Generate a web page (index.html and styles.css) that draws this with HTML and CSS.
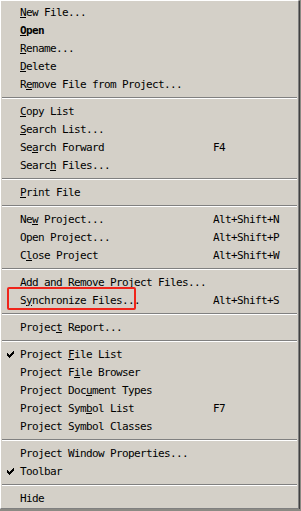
FILE: index.html
```html
<!DOCTYPE html>
<html lang="en">
<head>
    <meta charset="UTF-8">
    <title>Project menu</title>
    <link rel="stylesheet" href="styles.css">
</head>
<body>

    <div class="menu">
        <div class="item"><span class="label"><u>N</u>ew File...</span></div>
        <div class="item"><span class="label bold"><u>O</u>pen</span></div>
        <div class="item"><span class="label"><u>R</u>ename...</span></div>
        <div class="item"><span class="label"><u>D</u>elete</span></div>
        <div class="item"><span class="label">R<u>e</u>move File from Project...</span></div>
        <div class="sep"></div>

        <div class="item"><span class="label"><u>C</u>opy List</span></div>
        <div class="item"><span class="label"><u>S</u>earch List...</span></div>
        <div class="item"><span class="label">Se<u>a</u>rch Forward</span><span class="key">F4</span></div>
        <div class="item"><span class="label">Searc<u>h</u> Files...</span></div>
        <div class="sep"></div>

        <div class="item"><span class="label"><u>P</u>rint File</span></div>
        <div class="sep"></div>

        <div class="item"><span class="label">Ne<u>w</u> Project...</span><span class="key">Alt+Shift+N</span></div>
        <div class="item"><span class="label">Open Project...</span><span class="key">Alt+Shift+P</span></div>
        <div class="item"><span class="label">C<u>l</u>ose Project</span><span class="key">Alt+Shift+W</span></div>
        <div class="sep"></div>

        <div class="item"><span class="label">Add and Remove Project Files...</span></div>
        <div class="item">
            <span class="label">S<u>y</u>nchronize Files...</span><span class="key">Alt+Shift+S</span>
            <span class="callout"></span>
        </div>
        <div class="sep"></div>

        <div class="item"><span class="label">Projec<u>t</u> Report...</span></div>
        <div class="sep"></div>

        <div class="item">
            <svg class="check" width="7" height="7" viewBox="0 0 7 7"><path d="M0 2h1v1h1v1h1v-1h1v-1h1v-1h1v-1h1v3h-1v1h-1v1h-1v1h-1v1h-1v-1h-1v-1h-1z" fill="#000"/></svg>
            <span class="label">Project <u>F</u>ile List</span>
        </div>
        <div class="item"><span class="label">Project F<u>i</u>le Browser</span></div>
        <div class="item"><span class="label">Project Doc<u>u</u>ment Types</span></div>
        <div class="item"><span class="label">Project Sym<u>b</u>ol List</span><span class="key">F7</span></div>
        <div class="item"><span class="label">Project Symbol Classes</span></div>
        <div class="sep"></div>

        <div class="item"><span class="label">Project Window Properties...</span></div>
        <div class="item">
            <svg class="check" width="7" height="7" viewBox="0 0 7 7"><path d="M0 2h1v1h1v1h1v-1h1v-1h1v-1h1v-1h1v3h-1v1h-1v1h-1v1h-1v1h-1v-1h-1v-1h-1z" fill="#000"/></svg>
            <span class="label">Toolbar</span>
        </div>
        <div class="sep"></div>

        <div class="item"><span class="label">Hide</span></div>
    </div>

</body>
</html>
```

FILE: styles.css
```css
body {
    margin: 0;
    background-color: #8c8a84;
}

.menu {
    width: 295px;
    padding: 2px 1px 1px 1px;
    background-color: #d4d0c8;
    border-top: 1px solid #ffffff;
    border-left: 1px solid #ffffff;
    border-right: 1px solid #808080;
    border-bottom: 1px solid #808080;
    box-shadow: 1px 1px 0 #404040;
    font-family: 'DejaVu Sans Mono', 'Liberation Mono', monospace;
    font-size: 11px;
    letter-spacing: -0.62px;
    color: #000;
}

.item {
    position: relative;
    display: flex;
    align-items: center;
    height: 18px;
    padding-left: 18px;
    white-space: nowrap;
}

.label {
    width: 193px;
}

.bold {
    font-weight: bold;
}

.key {
    flex: 1;
}

.check {
    position: absolute;
    left: 5px;
    top: 6px;
}

.sep {
    height: 9px;
    box-sizing: border-box;
    padding-top: 4px;
}

.sep::before {
    content: "";
    display: block;
    height: 1px;
    background-color: #808080;
    border-bottom: 1px solid #ffffff;
}

.callout {
    position: absolute;
    left: 5px;
    top: -4px;
    width: 125px;
    height: 19px;
    border: 2px solid #f0241a;
    border-radius: 2px;
}
```
